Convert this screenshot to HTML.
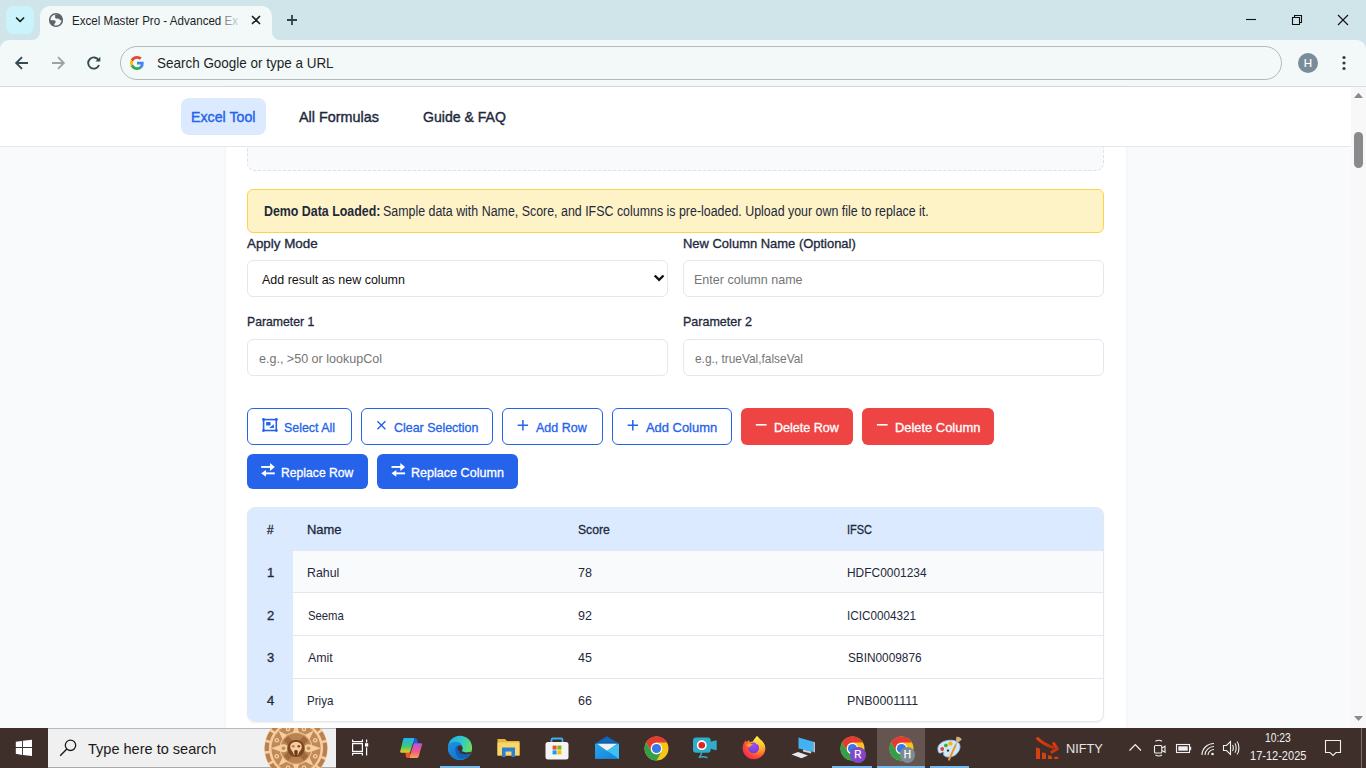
<!DOCTYPE html>
<html><head><meta charset="utf-8"><title>Excel Master Pro</title>
<style>
html,body{margin:0;padding:0;width:1366px;height:768px;overflow:hidden;background:#f8fafc;font-family:"Liberation Sans",sans-serif;}
.a{position:absolute;box-sizing:border-box;}
.t{position:absolute;white-space:pre;line-height:1;transform-origin:0 0;font-family:"Liberation Sans",sans-serif;z-index:5;}
svg{position:absolute;overflow:visible;}
</style></head><body>
<!-- ============ CHROME ============ -->
<div class="a" style="left:0;top:0;width:1366px;height:60px;background:#cfe5ea;"></div>
<div class="a" style="left:6px;top:6px;width:28px;height:28px;border-radius:8px;background:#cbf3fb;"></div>
<svg style="left:0;top:0" width="40" height="40"><path d="M16.6 18 L20.1 21.5 L23.6 18" fill="none" stroke="#1f1f1f" stroke-width="1.7" stroke-linecap="round" stroke-linejoin="round"/></svg>
<!-- toolbar -->
<div class="a" style="left:0;top:40px;width:1366px;height:46px;background:#f3f9f9;border-radius:9px 9px 0 0;"></div>
<div class="a" style="left:0;top:86px;width:1366px;height:1px;background:#d5dcde;"></div>
<!-- active tab -->
<svg style="left:0;top:0" width="300" height="41"><path d="M32 40 A8 8 0 0 0 40 32 L40 16 A10 10 0 0 1 50 6 L262 6 A10 10 0 0 1 272 16 L272 32 A8 8 0 0 0 280 40 Z" fill="#f3f9f9"/></svg>
<!-- globe icon -->
<svg style="left:44px;top:8px" width="24" height="24" viewBox="0 0 24 24"><circle cx="12" cy="12" r="6.3" fill="none" stroke="#5f6368" stroke-width="1.6"/>
<path d="M11.1 7 C12.5 6.3 15 6.5 16.5 7.8 C17.8 9 18.4 10.6 18.2 12.3 C17 12.6 16 12 15.2 11.3 C14.3 10.6 13 10.9 12 10.6 C11.3 10.3 11 9.8 11.1 9 Z" fill="#5f6368"/>
<path d="M5.8 12.2 C7.4 12.1 9.6 12.1 10.8 12.6 C11.9 13.1 12 14.2 11.2 14.9 C10.5 15.5 10.2 16.3 10.1 17.8 C8 17.4 6.2 15.2 5.8 12.2 Z" fill="#5f6368"/></svg>
<!-- tab close -->
<svg style="left:0;top:0" width="300" height="40"><path d="M252.5 16.5 L259.5 23.5 M259.5 16.5 L252.5 23.5" stroke="#1f1f1f" stroke-width="1.7" stroke-linecap="round"/></svg>
<!-- new tab plus -->
<svg style="left:0;top:0" width="320" height="40"><path d="M292 15 L292 25 M287 20 L297 20" stroke="#2b4247" stroke-width="1.8"/></svg>
<!-- window controls -->
<svg style="left:0;top:0" width="1366" height="40"><path d="M1246 19.5 L1256 19.5" stroke="#111" stroke-width="1.1"/>
<path d="M1292.5 17.5 H1299.5 V24.5 H1292.5 Z" fill="none" stroke="#111" stroke-width="1.1"/><path d="M1294.5 17.5 V15.5 H1301.5 V22.5 H1299.5" fill="none" stroke="#111" stroke-width="1.1"/>
<path d="M1338 15 L1348 25 M1348 15 L1338 25" stroke="#111" stroke-width="1.1"/></svg>
<!-- nav arrows -->
<svg style="left:0;top:40px" width="120" height="46"><path d="M28 23 H16.5 M22 17.2 L16.2 23 L22 28.8" fill="none" stroke="#334b51" stroke-width="1.9"/>
<path d="M52 23 H63.5 M58 17.2 L63.8 23 L58 28.8" fill="none" stroke="#9aa3a6" stroke-width="1.9"/>
<path d="M98.6 20.2 A5.6 5.6 0 1 0 99 25" fill="none" stroke="#334b51" stroke-width="1.9"/><path d="M100.3 16.8 V21.6 H95.5 Z" fill="#334b51"/></svg>
<!-- omnibox -->
<div class="a" style="left:120px;top:46px;width:1162px;height:34px;border-radius:17px;border:1px solid #b3babb;background:#f3f9f9;"></div>
<svg style="left:130px;top:56px" width="14" height="14" viewBox="0 0 48 48"><path fill="#EA4335" d="M24 9.5c3.54 0 6.71 1.22 9.21 3.6l6.85-6.85C35.9 2.38 30.47 0 24 0 14.62 0 6.51 5.38 2.56 13.22l7.98 6.19C12.43 13.72 17.74 9.5 24 9.5z"/><path fill="#4285F4" d="M46.98 24.55c0-1.57-.15-3.09-.38-4.55H24v9.02h12.94c-.58 2.96-2.26 5.48-4.78 7.18l7.73 6c4.51-4.18 7.09-10.36 7.09-17.65z"/><path fill="#FBBC05" d="M10.53 28.59c-.48-1.45-.76-2.99-.76-4.59s.27-3.14.76-4.59l-7.98-6.19C.92 16.46 0 20.12 0 24c0 3.88.92 7.54 2.56 10.78l7.97-6.19z"/><path fill="#34A853" d="M24 48c6.48 0 11.93-2.13 15.89-5.81l-7.73-6c-2.15 1.45-4.92 2.3-8.16 2.3-6.26 0-11.57-4.22-13.47-9.91l-7.98 6.19C6.51 42.62 14.62 48 24 48z"/></svg>
<!-- avatar -->
<div class="a" style="left:1298px;top:53px;width:20px;height:20px;border-radius:50%;background:#788d99;"></div>
<div class="a" style="left:1298px;top:58px;width:20px;line-height:1;text-align:center;color:#fff;font-size:11.5px;-webkit-text-stroke:0.15px #fff;">H</div>
<svg style="left:0;top:0" width="1366" height="86"><circle cx="1344" cy="57.5" r="1.6" fill="#2b4046"/><circle cx="1344" cy="63" r="1.6" fill="#2b4046"/><circle cx="1344" cy="68.5" r="1.6" fill="#2b4046"/></svg>

<!-- ============ PAGE ============ -->
<div class="a" style="left:0;top:87px;width:1351px;height:641px;background:#f8fafc;"></div>
<div class="a" style="left:226px;top:87px;width:900px;height:641px;background:#ffffff;box-shadow:0 0 3px rgba(15,23,42,0.06);"></div>
<!-- dashed upload box -->
<div class="a" style="left:247px;top:100px;width:857px;height:71px;border:1px dashed #dae2eb;border-radius:8px;background:#f8fafc;"></div>
<!-- navbar -->
<div class="a" style="left:0;top:87px;width:1351px;height:60px;background:#fff;border-bottom:1px solid #e2e8f0;z-index:2;"></div>
<div class="a" style="left:181px;top:98px;width:85px;height:37px;border-radius:8px;background:#dbeafe;z-index:3;"></div>
<!-- warning -->
<div class="a" style="left:247px;top:189px;width:857px;height:44px;border:1.3px solid #fcd34d;border-radius:6px;background:#fef3c7;"></div>
<!-- inputs -->
<div class="a" style="left:247px;top:260px;width:421px;height:37px;border:1px solid #e2e8f0;border-radius:6px;background:#fff;"></div>
<svg style="left:0;top:0" width="700" height="300"><path d="M655.5 276.3 L659.1 279.9 L662.7 276.3" fill="none" stroke="#111" stroke-width="2.3" stroke-linecap="square"/></svg>
<div class="a" style="left:683px;top:260px;width:421px;height:37px;border:1px solid #e2e8f0;border-radius:6px;background:#fff;"></div>
<div class="a" style="left:247px;top:339px;width:421px;height:37px;border:1px solid #e2e8f0;border-radius:6px;background:#fff;"></div>
<div class="a" style="left:683px;top:339px;width:421px;height:37px;border:1px solid #e2e8f0;border-radius:6px;background:#fff;"></div>
<!-- buttons row 1 -->
<div class="a" style="left:247px;top:408px;width:105px;height:37px;border:1px solid #2563eb;border-radius:6px;background:#fff;"></div>
<div class="a" style="left:361px;top:408px;width:132px;height:37px;border:1px solid #2563eb;border-radius:6px;background:#fff;"></div>
<div class="a" style="left:502px;top:408px;width:101px;height:37px;border:1px solid #2563eb;border-radius:6px;background:#fff;"></div>
<div class="a" style="left:612px;top:408px;width:120px;height:37px;border:1px solid #2563eb;border-radius:6px;background:#fff;"></div>
<div class="a" style="left:741px;top:408px;width:112px;height:37px;border-radius:6px;background:#ef4444;"></div>
<div class="a" style="left:862px;top:408px;width:132px;height:37px;border-radius:6px;background:#ef4444;"></div>
<!-- button icons row 1 -->
<svg style="left:0;top:0" width="1000" height="500">
 <!-- select all icon -->
 <g fill="#2563eb"><rect x="263.6" y="419.6" width="12.7" height="10.9" fill="none" stroke="#2563eb" stroke-width="1.6"/>
 <circle cx="263.5" cy="419.5" r="1.4"/><circle cx="276.4" cy="419.5" r="1.4"/><circle cx="263.5" cy="430.6" r="1.4"/><circle cx="276.4" cy="430.6" r="1.4"/>
 <rect x="266.1" y="422.1" width="4.5" height="3.5" rx="0.6"/><path d="M269.2 427.9 L273.9 424.2 L273.9 427.9 Z"/></g>
 <path d="M377.4 421.3 L385.4 429.3 M385.4 421.3 L377.4 429.3" stroke="#2563eb" stroke-width="1.4"/>
 <path d="M522.9 420 V430.4 M517.7 425.2 H528.1" stroke="#2563eb" stroke-width="1.5"/>
 <path d="M632.8 420 V430.4 M627.6 425.2 H638" stroke="#2563eb" stroke-width="1.5"/>
 <path d="M755.8 424.8 H766.6" stroke="#fff" stroke-width="1.6"/>
 <path d="M876.9 424.8 H887.6" stroke="#fff" stroke-width="1.6"/>
</svg>
<!-- buttons row 2 -->
<div class="a" style="left:247px;top:454px;width:121px;height:35px;border-radius:6px;background:#2563eb;"></div>
<div class="a" style="left:377px;top:454px;width:141px;height:35px;border-radius:6px;background:#2563eb;"></div>
<svg style="left:0;top:0" width="600" height="500">
 <g fill="#fff"><rect x="261.2" y="466" width="9.6" height="1.9"/><path d="M270.0 463 L274.8 466.95 L270.0 470.9 Z"/><rect x="265.4" y="472.4" width="9.4" height="1.9"/><path d="M266.0 469.9 L261.2 473.35 L266.0 476.8 Z"/></g>
 <g fill="#fff"><rect x="391.5" y="466" width="9.6" height="1.9"/><path d="M400.3 463 L405.1 466.95 L400.3 470.9 Z"/><rect x="395.7" y="472.4" width="9.4" height="1.9"/><path d="M396.3 469.9 L391.5 473.35 L396.3 476.8 Z"/></g>
</svg>
<!-- table -->
<div class="a" style="left:247px;top:507px;width:857px;height:215px;border:1px solid #e2e8f0;border-radius:8px;background:#fff;overflow:hidden;box-shadow:0 1px 2px rgba(15,23,42,0.06);">
  <div class="a" style="left:0;top:0;width:855px;height:42px;background:#dbeafe;"></div>
  <div class="a" style="left:0;top:42px;width:855px;height:1px;background:#e2e8f0;"></div>
  <div class="a" style="left:0;top:43px;width:45px;height:180px;background:#dbeafe;"></div>
  <div class="a" style="left:45px;top:43px;width:810px;height:41px;background:#f8fafc;"></div>
  <div class="a" style="left:0;top:84px;width:855px;height:1px;background:#e2e8f0;"></div>
  <div class="a" style="left:0;top:127px;width:855px;height:1px;background:#e2e8f0;"></div>
  <div class="a" style="left:0;top:170px;width:855px;height:1px;background:#e2e8f0;"></div>
</div>
<!-- scrollbar -->
<div class="a" style="left:1351px;top:87px;width:15px;height:641px;background:#f8f8f8;"></div>
<svg style="left:0;top:0" width="1366" height="768"><path d="M1354 98 L1358.5 92.8 L1363 98 Z" fill="#8a8a8a"/><path d="M1354 716 L1358.5 721 L1363 716 Z" fill="#8a8a8a"/></svg>
<div class="a" style="left:1354px;top:132px;width:9px;height:36px;border-radius:4.5px;background:#8a8a8a;"></div>

<!-- ============ TASKBAR ============ -->
<div class="a" style="left:0;top:728px;width:1366px;height:40px;background:#3f2f2b;"></div>
<svg style="left:0;top:728px" width="48" height="40"><path d="M15.8 13.8 L22 12.9 V18.9 H15.8 Z M22.9 12.7 L32 11.8 V18.9 H22.9 Z M15.8 20 H22 V27 L15.8 25.7 Z M22.9 20 H32 V28 L22.9 27 Z" fill="#fff"/></svg>
<div class="a" style="left:48px;top:728px;width:288px;height:40px;background:#f0f0f0;border-top:1px solid #b9b9b9;border-bottom:1px solid #a9a9a9;"></div>
<svg style="left:0;top:728px" width="90" height="40"><circle cx="70.5" cy="17.3" r="5.2" fill="none" stroke="#1a1a1a" stroke-width="1.3"/><path d="M66.8 21 L60.2 27.8" stroke="#1a1a1a" stroke-width="1.4"/></svg>
<!-- aztec doodle -->
<svg style="left:0;top:728px" width="340" height="40"><defs><clipPath id="cp"><rect x="48" y="0" width="288" height="40"/></clipPath></defs><g clip-path="url(#cp)"><circle cx="296" cy="20.3" r="31.8" fill="#f6cd9f"/><circle cx="296" cy="20.3" r="29.2" fill="none" stroke="#b98150" stroke-width="4.2" stroke-dasharray="8.5 2.6"/><circle cx="296" cy="20.3" r="25.8" fill="#f6cd9f"/><circle cx="296" cy="20.3" r="24.6" fill="#c08a58"/><circle cx="315.2" cy="28.3" r="2.3" fill="#f6cd9f"/><circle cx="315.2" cy="28.3" r="1.0" fill="#c08a58"/><circle cx="304.0" cy="39.5" r="2.3" fill="#f6cd9f"/><circle cx="304.0" cy="39.5" r="1.0" fill="#c08a58"/><circle cx="288.0" cy="39.5" r="2.3" fill="#f6cd9f"/><circle cx="288.0" cy="39.5" r="1.0" fill="#c08a58"/><circle cx="276.8" cy="28.3" r="2.3" fill="#f6cd9f"/><circle cx="276.8" cy="28.3" r="1.0" fill="#c08a58"/><circle cx="276.8" cy="12.3" r="2.3" fill="#f6cd9f"/><circle cx="276.8" cy="12.3" r="1.0" fill="#c08a58"/><circle cx="288.0" cy="1.1" r="2.3" fill="#f6cd9f"/><circle cx="288.0" cy="1.1" r="1.0" fill="#c08a58"/><circle cx="304.0" cy="1.1" r="2.3" fill="#f6cd9f"/><circle cx="304.0" cy="1.1" r="1.0" fill="#c08a58"/><circle cx="315.2" cy="12.3" r="2.3" fill="#f6cd9f"/><circle cx="315.2" cy="12.3" r="1.0" fill="#c08a58"/><path d="M321.0 20.3 L311.7 17.1 L311.7 23.5 Z" fill="#f6cd9f"/><path d="M313.7 38.0 L309.3 29.1 L304.8 33.6 Z" fill="#f6cd9f"/><path d="M296.0 45.3 L299.2 36.0 L292.8 36.0 Z" fill="#f6cd9f"/><path d="M278.3 38.0 L287.2 33.6 L282.7 29.1 Z" fill="#f6cd9f"/><path d="M271.0 20.3 L280.3 23.5 L280.3 17.1 Z" fill="#f6cd9f"/><path d="M278.3 2.6 L282.7 11.5 L287.2 7.0 Z" fill="#f6cd9f"/><path d="M296.0 -4.7 L292.8 4.6 L299.2 4.6 Z" fill="#f6cd9f"/><path d="M313.7 2.6 L304.8 7.0 L309.3 11.5 Z" fill="#f6cd9f"/><circle cx="296" cy="20.3" r="16.5" fill="#f6cd9f"/><circle cx="296" cy="20.3" r="15.6" fill="#c99260"/><circle cx="296" cy="20.3" r="14.6" fill="#b98452"/><rect x="300.6" y="24.9" width="6.4" height="6.4" transform="rotate(45 303.8 28.1)" fill="#a06a3c"/><rect x="285.0" y="24.9" width="6.4" height="6.4" transform="rotate(45 288.2 28.1)" fill="#a06a3c"/><rect x="285.0" y="9.3" width="6.4" height="6.4" transform="rotate(45 288.2 12.5)" fill="#a06a3c"/><rect x="300.6" y="9.3" width="6.4" height="6.4" transform="rotate(45 303.8 12.5)" fill="#a06a3c"/><circle cx="283.5" cy="20.3" r="4" fill="#f6cd9f"/><circle cx="283.5" cy="20.3" r="1.8" fill="#c08a5a"/><circle cx="308.5" cy="20.3" r="4" fill="#f6cd9f"/><circle cx="308.5" cy="20.3" r="1.8" fill="#c08a5a"/><circle cx="296" cy="20.3" r="8.6" fill="#7a4520"/><path d="M290.2 19 C290.2 15.5 292.6 14 296 14 C299.4 14 301.8 15.5 301.8 19 C301.8 21.5 299.8 22.5 299 24.5 L298 27 H294 L293 24.5 C292.2 22.5 290.2 21.5 290.2 19 Z" fill="#f6cd9f"/><circle cx="293.2" cy="18.2" r="1.3" fill="#c07a3a"/><circle cx="298.8" cy="18.2" r="1.3" fill="#7a4520"/><path d="M294.2 23 C295 21.8 297 21.8 297.8 23 L297.4 27 H294.6 Z" fill="#6a3a18"/></g></svg>
<!-- task view -->
<svg style="left:0;top:728px" width="380" height="40"><g fill="none" stroke="#fff" stroke-width="1.2"><path d="M352.6 11.5 V13.6 H362.4 V11.5"/><rect x="352.6" y="15.6" width="9.8" height="7.8"/><path d="M352.6 27.4 V25.4 H362.4 V27.4"/><path d="M366.6 11.5 V14.5 M366.6 19.5 V27.4"/></g><rect x="365" y="15.2" width="3.2" height="3.4" fill="#fff"/></svg>
<!-- copilot -->
<svg style="left:395px;top:732px" width="35" height="32" viewBox="0 0 35 32"><defs>
<linearGradient id="cpa" x1="0" y1="0" x2="0" y2="1"><stop offset="0" stop-color="#1ab4f5"/><stop offset="0.55" stop-color="#3cc87a"/><stop offset="1" stop-color="#f7c81a"/></linearGradient>
<linearGradient id="cpb" x1="0" y1="0" x2="0" y2="1"><stop offset="0" stop-color="#b455e6"/><stop offset="0.55" stop-color="#f05a8a"/><stop offset="1" stop-color="#fda34a"/></linearGradient></defs>
<path d="M17 6 H19.5 C21 6 21.8 6.8 22.3 8 L23.5 11.5 H17 Z" fill="#1a5fd8"/>
<path d="M10.5 20.5 H15 L14.5 26 H13 C11.8 26 11.2 25.3 10.8 24.2 Z" fill="#f0562a"/>
<path d="M9.6 6 H18.2 C18.9 6 19.3 6.6 19.1 7.3 L15.3 19.5 C15 20.3 14.3 20.8 13.5 20.8 H6.4 C5.6 20.8 5 20.1 5.2 19.3 L8.2 7.2 C8.4 6.5 9 6 9.6 6 Z" fill="url(#cpa)"/>
<path d="M20 11.3 H26.2 C26.9 11.3 27.3 11.9 27.1 12.6 L23.6 24.8 C23.4 25.5 22.7 26 22 26 H15.4 C14.7 26 14.3 25.4 14.5 24.7 L18.4 12.5 C18.6 11.8 19.3 11.3 20 11.3 Z" fill="url(#cpb)"/>
</svg>
<!-- edge -->
<svg style="left:444px;top:732px" width="32" height="32" viewBox="0 0 32 32"><defs><linearGradient id="eg1" x1="0" y1="0.2" x2="1" y2="0.6"><stop offset="0" stop-color="#20b0ec"/><stop offset="0.5" stop-color="#30c8c8"/><stop offset="1" stop-color="#6ee455"/></linearGradient><linearGradient id="eg2" x1="0" y1="0" x2="0.3" y2="1"><stop offset="0" stop-color="#1e90e0"/><stop offset="1" stop-color="#1477d6"/></linearGradient></defs>
<circle cx="16" cy="15.8" r="12.1" fill="url(#eg1)"/>
<path d="M3.9 15.5 C4 11.2 8 9.8 11.5 9.8 C14.5 9.8 17.6 11.2 18 13.5 L18 19 C21 21 24.5 21.5 27.2 20.5 C25.2 25 21 27.9 16 27.9 C9.3 27.9 3.9 22.5 3.9 15.5 Z" fill="url(#eg2)"/>
<path d="M11.2 17.2 C11.2 14.6 13 13.2 15 13.2 C16.5 13.2 17.5 14 18 15 L18 19 C20.5 21 24 21.6 26.6 21 C25.4 24.6 21.5 26.8 18 26.8 C14 26.8 11.2 22.2 11.2 17.2 Z" fill="#1462b8"/>
<ellipse cx="16.2" cy="16.3" rx="2.4" ry="2.9" fill="#3f2f2b"/>
<path d="M15.6 18.6 C18.6 20.6 23 21.3 26.6 19.6 L26.9 21.2 C23 22.9 18.6 22.4 15.2 20.4 Z" fill="#3f2f2b"/>
</svg>
<div class="a" style="left:440px;top:765.7px;width:40px;height:2.3px;background:#76b9ed;"></div>
<!-- files -->
<svg style="left:497px;top:738px" width="23" height="20" viewBox="0 0 23 20"><path d="M0.5 1 H8 L10 3 H22.5 V17.5 H0.5 Z" fill="#e8b73a"/><path d="M0.5 4.5 H22.5 V17.5 H0.5 Z" fill="#fcd66a"/><path d="M5 9.5 H18 V19 H14.5 V13.5 H8.5 V19 H5 Z" fill="#2a7fd6"/></svg>
<!-- store -->
<svg style="left:545px;top:737px" width="24" height="23" viewBox="0 0 24 23"><path d="M6.5 7 V3 C6.5 2 7 1.5 8 1.5 H16 C17 1.5 17.5 2 17.5 3 V7" fill="none" stroke="#3cb4ea" stroke-width="1.8"/><rect x="0.5" y="5" width="23" height="17.5" rx="2.5" fill="#f4f4f4"/><rect x="7.6" y="8.6" width="4" height="4" fill="#f25022"/><rect x="12.4" y="8.6" width="4" height="4" fill="#7fba00"/><rect x="7.6" y="13.4" width="4" height="4" fill="#00a4ef"/><rect x="12.4" y="13.4" width="4" height="4" fill="#ffb900"/></svg>
<!-- mail -->
<svg style="left:590px;top:732px" width="32" height="32" viewBox="0 0 32 32"><defs><linearGradient id="mg" x1="0" y1="0" x2="1" y2="1"><stop offset="0" stop-color="#2aa6ec"/><stop offset="1" stop-color="#1482dc"/></linearGradient></defs>
<path d="M5 11.4 L16.9 4.3 L29 11.4 Z" fill="#0e66bd"/>
<rect x="5" y="11" width="24" height="15.9" fill="url(#mg)"/>
<path d="M16.9 18.8 L29 11.4 L29 26.9 Z" fill="#3bc2f2"/>
<path d="M16.9 18.8 L29 26.9 L22 26.9 Z" fill="#1a8ae0" opacity="0.6"/>
<rect x="5" y="10.6" width="24" height="1" fill="#0a509c"/>
<path d="M7.2 11.8 L27.2 11.8 L16.9 18.8 Z" fill="#f0f0f0"/></svg>
<!-- chrome -->
<svg style="left:643.5px;top:735.5px" width="25" height="25" viewBox="0 0 48 48"><circle cx="24" cy="24" r="23" fill="#f5c518"/><path d="M4.08 12.5 A23 23 0 0 1 43.92 12.5 L24 12.5 A11.5 11.5 0 0 0 14.04 29.75 Z" fill="#e53935"/><path d="M4.08 12.5 L14.04 29.75 A11.5 11.5 0 0 0 33.96 29.75 L24 47 A23 23 0 0 1 4.08 12.5 Z" fill="#2fa14d"/><circle cx="24" cy="24" r="11" fill="#fff"/><circle cx="24" cy="24" r="8.8" fill="#3b78e7"/></svg>
<!-- camera -->
<svg style="left:688px;top:732px" width="32" height="32" viewBox="0 0 32 32">
<rect x="5" y="5.4" width="17.7" height="15.4" rx="3" fill="#2eaec8"/>
<path d="M21.5 10 L27.2 8.4 Q28.7 8 28.7 9.4 V17.2 Q28.7 18.6 27.2 18.1 L21.5 16.6 Z" fill="#2eaec8"/>
<circle cx="13.75" cy="13.2" r="4.9" fill="#fff"/><circle cx="13.75" cy="13.2" r="3.3" fill="#e02424"/>
<path d="M13.6 20.8 C13.2 22.6 12.3 23.6 11.6 25.2 M11.3 25.4 C13.2 24.3 17 24.4 19 25.6" fill="none" stroke="#2eaec8" stroke-width="1.5" stroke-linecap="round"/></svg>
<!-- firefox -->
<svg style="left:738px;top:732px" width="32" height="32" viewBox="0 0 32 32"><defs>
<radialGradient id="fg" cx="0.75" cy="0.25" r="1"><stop offset="0" stop-color="#ffde45"/><stop offset="0.35" stop-color="#ffa22a"/><stop offset="0.65" stop-color="#ff4a30"/><stop offset="1" stop-color="#e4137c"/></radialGradient>
<linearGradient id="fy" x1="0" y1="0" x2="0" y2="1"><stop offset="0" stop-color="#fff044"/><stop offset="1" stop-color="#ffb62a"/></linearGradient>
<radialGradient id="fp" cx="0.5" cy="0.3" r="0.8"><stop offset="0" stop-color="#9b4ef0"/><stop offset="1" stop-color="#6a3ad8"/></radialGradient></defs>
<path d="M16 27.2 C9.6 27.2 4.6 22.3 4.6 16.2 C4.6 12.8 6 10.2 7.8 8.2 L8.4 10 L11.2 8 L11.6 10.2 C12.6 9.6 14 9.4 15 9.6 C16 7.5 17.8 5.4 19 4 C21 6.5 23.5 8.5 25 10.2 C26.5 12 27.3 14.5 27.3 16.5 C27.3 22.5 22.3 27.2 16 27.2 Z" fill="url(#fg)"/>
<path d="M15 9.8 C16 7.5 17.8 5.4 19 4 C21 6.5 23.5 8.5 25 10.2 C26.5 12 27.2 14.5 27.2 16.8 C26 14 23 12.5 20 11.5 C18 10.8 16.5 10.3 15 9.8 Z" fill="url(#fy)"/>
<circle cx="15.6" cy="15.9" r="5.4" fill="url(#fp)"/>
<path d="M8 13.2 C9.8 11.4 12.6 11.6 15.2 12.6 C13.6 13.4 12.4 14.4 11.4 15.6 C10.4 14.6 9.2 13.8 8 13.2 Z" fill="#ffa31f"/>
<path d="M17.6 11.6 C18.6 11 19.6 11.3 20 12.4 C19 12.3 18.2 12.4 17.6 11.6 Z" fill="#ffd0a0"/></svg>
<!-- pc -->
<svg style="left:791px;top:737px" width="25" height="22" viewBox="0 0 25 22"><path d="M7.5 0.5 L22.5 4.8 V15 L7.5 11.5 Z" fill="#44b2f2"/><path d="M22.5 4.8 L23.8 5.3 V15.5 L22.5 15 Z" fill="#d0e8f6"/><path d="M12 12.5 L20.2 14.6 V16.6 L12 14.5 Z" fill="#cfd6dc"/><path d="M0.5 17.5 L7 15 L17 18.5 L10.5 21.3 Z" fill="#e6e9ec"/></svg>
<!-- chrome R -->
<svg style="left:839.5px;top:735.8px" width="25" height="25" viewBox="0 0 48 48"><circle cx="24" cy="24" r="23" fill="#f5c518"/><path d="M4.08 12.5 A23 23 0 0 1 43.92 12.5 L24 12.5 A11.5 11.5 0 0 0 14.04 29.75 Z" fill="#e53935"/><path d="M4.08 12.5 L14.04 29.75 A11.5 11.5 0 0 0 33.96 29.75 L24 47 A23 23 0 0 1 4.08 12.5 Z" fill="#2fa14d"/><circle cx="24" cy="24" r="11" fill="#fff"/><circle cx="24" cy="24" r="8.8" fill="#3b78e7"/></svg>
<div class="a" style="left:850px;top:747px;width:15.5px;height:15.5px;border-radius:50%;background:#8446c8;"></div>
<div class="a" style="left:850px;top:747px;width:15.5px;height:15.5px;line-height:15.5px;text-align:center;color:#fff;font-size:10px;-webkit-text-stroke:0.25px #fff;">R</div>
<!-- active chrome H -->
<div class="a" style="left:877px;top:728px;width:48px;height:40px;background:#655551;"></div>
<svg style="left:889px;top:735.8px" width="25" height="25" viewBox="0 0 48 48"><circle cx="24" cy="24" r="23" fill="#f5c518"/><path d="M4.08 12.5 A23 23 0 0 1 43.92 12.5 L24 12.5 A11.5 11.5 0 0 0 14.04 29.75 Z" fill="#e53935"/><path d="M4.08 12.5 L14.04 29.75 A11.5 11.5 0 0 0 33.96 29.75 L24 47 A23 23 0 0 1 4.08 12.5 Z" fill="#2fa14d"/><circle cx="24" cy="24" r="11" fill="#fff"/><circle cx="24" cy="24" r="8.8" fill="#3b78e7"/></svg>
<div class="a" style="left:899.5px;top:747px;width:15.5px;height:15.5px;border-radius:50%;background:#7c8b94;"></div>
<div class="a" style="left:899.5px;top:747px;width:15.5px;height:15.5px;line-height:15.5px;text-align:center;color:#fff;font-size:10px;-webkit-text-stroke:0.25px #fff;">H</div>
<!-- paint -->
<svg style="left:934px;top:732px" width="32" height="32" viewBox="0 0 32 32">
<path d="M4 18 C3 13 8 9 15 8.3 C21 7.8 26 10 26 14.5 C26 19 22 24.5 15.5 25 C12 25.3 9.5 24 9.5 22 C9.5 21 10 20.5 9.5 20 C8.5 19.5 7 21.5 5.5 21 C4.5 20.6 4.2 19.5 4 18 Z" fill="#d4e9f8" stroke="#8cc4ea" stroke-width="0.9"/>
<circle cx="8.2" cy="17" r="1.9" fill="#e24236"/><circle cx="11.9" cy="13.4" r="1.9" fill="#44ad30"/><circle cx="16.4" cy="11.6" r="2.2" fill="#f4b41e"/>
<circle cx="14" cy="18.6" r="1.7" fill="#a8d2ee"/><circle cx="14" cy="18.6" r="1.05" fill="#2e2220"/>
<path d="M15 27.6 L21.6 13.2" stroke="#ee9630" stroke-width="2.1" stroke-linecap="round"/>
<path d="M21.6 13.2 L23.2 9.6" stroke="#aab4bc" stroke-width="1.3"/>
<path d="M22 9 L22.4 4.8 C24.6 4.3 26.8 5.4 27.8 7.6 L24.6 10.2 Z" fill="#d6ae78"/></svg>
<div class="a" style="left:832px;top:765.7px;width:40px;height:2.3px;background:#76b9ed;"></div>
<div class="a" style="left:877px;top:765.7px;width:48px;height:2.3px;background:#76b9ed;"></div>
<div class="a" style="left:930px;top:765.7px;width:39px;height:2.3px;background:#76b9ed;"></div>
<!-- tray -->
<svg style="left:1032px;top:734px" width="30" height="28" viewBox="0 0 30 28"><defs><linearGradient id="ng" x1="0" y1="0" x2="1" y2="1"><stop offset="0" stop-color="#ea3f08"/><stop offset="1" stop-color="#b8300f"/></linearGradient></defs>
<g stroke="url(#ng)" stroke-width="3.0" stroke-linecap="round" stroke-linejoin="round" fill="none"><path d="M5.6 4.5 C9 8 14 11 21 13.6"/><path d="M21.8 9.6 L25.4 15 L19.9 18"/></g>
<g fill="#d8400e"><path d="M4 14.2 Q4 13.3 5 13.5 L7 14.2 Q8 14.6 8 15.5 V25 H4 Z"/><path d="M10 19 Q10 18.2 11 18.4 L13 19 Q14 19.4 14 20.2 V25 H10 Z"/><path d="M16 21.8 Q16 21.2 17 21.3 L19 21.7 Q20 22 20 22.8 V25 H16 Z"/><rect x="22" y="22.7" width="4.4" height="2.4" rx="1"/></g></svg>
<svg style="left:0;top:728px" width="1366" height="40">
 <path d="M1129.5 22.5 L1135.3 16.5 L1141 22.5" fill="none" stroke="#f0f0f0" stroke-width="1.2"/>
 <g fill="none" stroke="#f0f0f0" stroke-width="1.1"><rect x="1154.5" y="17.5" width="7.3" height="7.5" rx="1"/><path d="M1162 20 L1165 18.3 V24.2 L1162 22.5"/><path d="M1155.5 13.3 C1157.5 12 1160 12 1162 13.3 M1155.5 27 C1157.5 28.3 1160 28.3 1162 27"/></g>
 <rect x="1176.5" y="16.5" width="13" height="8" fill="none" stroke="#f0f0f0" stroke-width="1.1"/><rect x="1178.3" y="18.3" width="9.4" height="4.4" fill="#f0f0f0"/><rect x="1189.8" y="18.8" width="1.4" height="3.4" fill="#f0f0f0"/>
 <g fill="none" stroke="#f0f0f0" stroke-width="1.1"><path d="M1202 27 C1202 21 1207 15.5 1214 15.5"/><path d="M1205 27 C1205 22.5 1209 18.5 1214 18.5"/><path d="M1208 27 C1208 24 1211 21.5 1214 21.5"/></g><circle cx="1212.5" cy="26" r="1.3" fill="#f0f0f0"/>
 <g fill="none" stroke="#f0f0f0" stroke-width="1.1"><path d="M1223.5 17.5 H1226.5 L1230.5 13.5 V26.5 L1226.5 22.5 H1223.5 Z"/><path d="M1232.5 17 C1233.6 18.5 1233.6 21.5 1232.5 23"/><path d="M1234.8 15.3 C1236.6 17.5 1236.6 22.5 1234.8 24.7"/><path d="M1237 13.5 C1239.6 16.5 1239.6 23.5 1237 26.5"/></g>
 <path d="M1325.5 12.5 H1340.5 V24.5 H1336 L1333 27.5 L1330 24.5 H1325.5 Z" fill="none" stroke="#f0f0f0" stroke-width="1.1"/>
 <path d="M1361.5 0 V40" stroke="#7a706d" stroke-width="1"/>
</svg>
<div class="t" style="left:71.68px;top:15.00px;font-size:12.6px;color:#1f1f1f;transform:scaleX(0.9194);">Excel Master Pro - Advanced Ex</div>
<div class="t" style="left:157.20px;top:56.00px;font-size:14.4px;color:#1f1f1f;transform:scaleX(0.9355);">Search Google or type a URL</div>
<div class="t" style="left:190.93px;top:110.00px;font-size:14.6px;color:#2563eb;transform:scaleX(0.9729);-webkit-text-stroke:0.4px #2563eb;">Excel Tool</div>
<div class="t" style="left:299.30px;top:110.00px;font-size:14.6px;color:#1e293b;transform:scaleX(0.9852);-webkit-text-stroke:0.4px #1e293b;">All Formulas</div>
<div class="t" style="left:423.00px;top:110.00px;font-size:14.6px;color:#1e293b;transform:scaleX(0.9635);-webkit-text-stroke:0.4px #1e293b;">Guide &amp; FAQ</div>
<div class="t" style="left:263.60px;top:205.00px;font-size:13.8px;font-weight:bold;color:#1e293b;transform:scaleX(0.8980);">Demo Data Loaded:</div>
<div class="t" style="left:383.20px;top:205.00px;font-size:13.8px;color:#1e293b;transform:scaleX(0.8997);">Sample data with Name, Score, and IFSC columns is pre-loaded. Upload your own file to replace it.</div>
<div class="t" style="left:247.40px;top:237.00px;font-size:13.2px;color:#1e293b;transform:scaleX(1.0143);-webkit-text-stroke:0.32px #1e293b;">Apply Mode</div>
<div class="t" style="left:682.82px;top:237.00px;font-size:13.2px;color:#1e293b;transform:scaleX(0.9822);-webkit-text-stroke:0.32px #1e293b;">New Column Name (Optional)</div>
<div class="t" style="left:262.40px;top:273.00px;font-size:13.2px;color:#111111;transform:scaleX(0.9465);">Add result as new column</div>
<div class="t" style="left:694.25px;top:273.00px;font-size:13.2px;color:#757575;transform:scaleX(0.9494);">Enter column name</div>
<div class="t" style="left:246.67px;top:315.00px;font-size:13.2px;color:#1e293b;transform:scaleX(0.9266);-webkit-text-stroke:0.32px #1e293b;">Parameter 1</div>
<div class="t" style="left:682.65px;top:315.00px;font-size:13.2px;color:#1e293b;transform:scaleX(0.9490);-webkit-text-stroke:0.32px #1e293b;">Parameter 2</div>
<div class="t" style="left:259.00px;top:352.00px;font-size:13.2px;color:#757575;transform:scaleX(0.9501);">e.g., &gt;50 or lookupCol</div>
<div class="t" style="left:694.80px;top:352.00px;font-size:13.2px;color:#757575;transform:scaleX(0.9015);">e.g., trueVal,falseVal</div>
<div class="t" style="left:284.30px;top:421.00px;font-size:13.2px;color:#2563eb;transform:scaleX(0.9393);-webkit-text-stroke:0.32px #2563eb;">Select All</div>
<div class="t" style="left:393.50px;top:421.00px;font-size:13.2px;color:#2563eb;transform:scaleX(0.9440);-webkit-text-stroke:0.32px #2563eb;">Clear Selection</div>
<div class="t" style="left:536.20px;top:421.00px;font-size:13.2px;color:#2563eb;transform:scaleX(0.9484);-webkit-text-stroke:0.32px #2563eb;">Add Row</div>
<div class="t" style="left:646.00px;top:421.00px;font-size:13.2px;color:#2563eb;transform:scaleX(0.9801);-webkit-text-stroke:0.32px #2563eb;">Add Column</div>
<div class="t" style="left:773.55px;top:421.00px;font-size:13.2px;color:#ffffff;transform:scaleX(0.9506);-webkit-text-stroke:0.32px #ffffff;">Delete Row</div>
<div class="t" style="left:894.52px;top:421.00px;font-size:13.2px;color:#ffffff;transform:scaleX(0.9780);-webkit-text-stroke:0.32px #ffffff;">Delete Column</div>
<div class="t" style="left:280.68px;top:466.00px;font-size:13.2px;color:#ffffff;transform:scaleX(0.9229);-webkit-text-stroke:0.32px #ffffff;">Replace Row</div>
<div class="t" style="left:410.95px;top:466.00px;font-size:13.2px;color:#ffffff;transform:scaleX(0.9526);-webkit-text-stroke:0.32px #ffffff;">Replace Column</div>
<div class="t" style="left:266.70px;top:524.00px;font-size:12.8px;color:#1e293b;transform:scaleX(0.9250);-webkit-text-stroke:0.32px #1e293b;">#</div>
<div class="t" style="left:306.89px;top:524.00px;font-size:12.8px;color:#1e293b;transform:scaleX(1.0116);-webkit-text-stroke:0.32px #1e293b;">Name</div>
<div class="t" style="left:577.50px;top:524.00px;font-size:12.8px;color:#1e293b;transform:scaleX(0.9516);-webkit-text-stroke:0.32px #1e293b;">Score</div>
<div class="t" style="left:847.14px;top:524.00px;font-size:12.8px;color:#1e293b;transform:scaleX(0.8564);-webkit-text-stroke:0.32px #1e293b;">IFSC</div>
<div class="t" style="left:267.10px;top:566.00px;font-size:13.0px;color:#1e293b;transform:scaleX(1.0000);-webkit-text-stroke:0.32px #1e293b;">1</div>
<div class="t" style="left:307.03px;top:567.00px;font-size:12.8px;color:#1e293b;transform:scaleX(0.9654);">Rahul</div>
<div class="t" style="left:577.50px;top:567.00px;font-size:12.8px;color:#1e293b;transform:scaleX(0.9775);">78</div>
<div class="t" style="left:847.07px;top:567.00px;font-size:12.8px;color:#1e293b;transform:scaleX(0.9330);">HDFC0001234</div>
<div class="t" style="left:267.10px;top:609.00px;font-size:13.0px;color:#1e293b;transform:scaleX(1.0000);-webkit-text-stroke:0.32px #1e293b;">2</div>
<div class="t" style="left:308.00px;top:610.00px;font-size:12.8px;color:#1e293b;transform:scaleX(0.8834);">Seema</div>
<div class="t" style="left:577.50px;top:610.00px;font-size:12.8px;color:#1e293b;transform:scaleX(0.9775);">92</div>
<div class="t" style="left:847.09px;top:610.00px;font-size:12.8px;color:#1e293b;transform:scaleX(0.9139);">ICIC0004321</div>
<div class="t" style="left:267.10px;top:651.00px;font-size:13.0px;color:#1e293b;transform:scaleX(1.0000);-webkit-text-stroke:0.32px #1e293b;">3</div>
<div class="t" style="left:308.00px;top:652.00px;font-size:12.8px;color:#1e293b;transform:scaleX(0.9678);">Amit</div>
<div class="t" style="left:577.50px;top:652.00px;font-size:12.8px;color:#1e293b;transform:scaleX(0.9775);">45</div>
<div class="t" style="left:848.00px;top:652.00px;font-size:12.8px;color:#1e293b;transform:scaleX(0.9225);">SBIN0009876</div>
<div class="t" style="left:267.10px;top:694.00px;font-size:13.0px;color:#1e293b;transform:scaleX(1.0000);-webkit-text-stroke:0.32px #1e293b;">4</div>
<div class="t" style="left:307.09px;top:695.00px;font-size:12.8px;color:#1e293b;transform:scaleX(0.9057);">Priya</div>
<div class="t" style="left:577.50px;top:695.00px;font-size:12.8px;color:#1e293b;transform:scaleX(0.9775);">66</div>
<div class="t" style="left:847.03px;top:695.00px;font-size:12.8px;color:#1e293b;transform:scaleX(0.9700);">PNB0001111</div>
<div class="t" style="left:87.90px;top:741.00px;font-size:15.0px;color:#1a1a1a;transform:scaleX(0.9687);">Type here to search</div>
<div class="t" style="left:1066.45px;top:742.00px;font-size:13.4px;color:#e6e6e6;transform:scaleX(0.9510);">NIFTY</div>
<div class="t" style="left:1264.70px;top:732.00px;font-size:12.0px;color:#f0f0f0;transform:scaleX(0.8598);">10:23</div>
<div class="t" style="left:1249.90px;top:750.00px;font-size:12.0px;color:#f0f0f0;transform:scaleX(0.9188);">17-12-2025</div>
<!-- tab title fade -->
<div class="a" style="left:222px;top:10px;width:22px;height:20px;background:linear-gradient(to right, rgba(243,249,250,0.35), rgba(243,249,250,1));z-index:6;"></div>
</body></html>
